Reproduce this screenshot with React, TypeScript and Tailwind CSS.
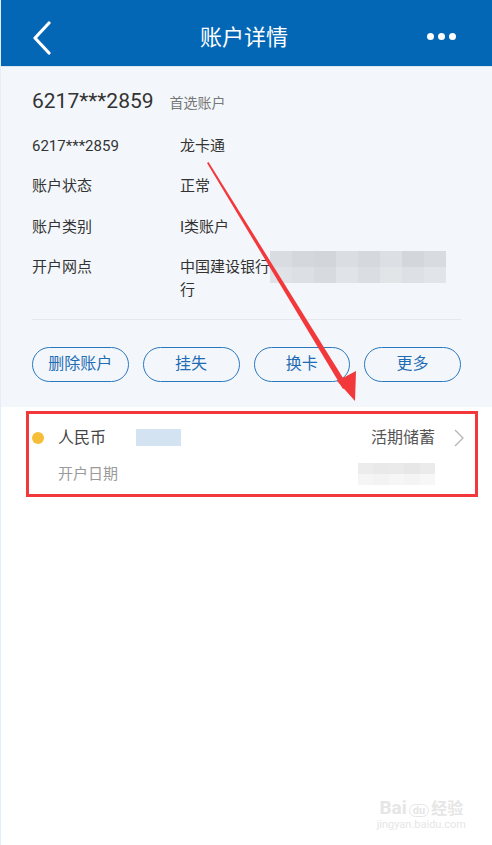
import React from "react";

const rows = [
  { label: "6217***2859", value: "龙卡通" },
  { label: "账户状态", value: "正常" },
  { label: "账户类别", value: "I类账户" },
];

const actions = ["删除账户", "挂失", "换卡", "更多"];

const App = () => {
  return (
    <div
      className="relative w-[492px] h-[845px] overflow-hidden bg-white border-l border-[#e4edf8]"
      style={{ fontFamily: '"Roboto", "Noto Sans CJK SC", sans-serif' }}
    >
      {/* header */}
      <div className="h-[67px] bg-[#0467b6] flex items-center justify-between pl-[30px] pr-[36px] pt-[8px] border-b border-[#dbe6f2]">
        <svg width="22" height="34" viewBox="0 0 22 34" className="mt-[2px]">
          <path d="M18 2 L4 17 L18 32" fill="none" stroke="white" strokeWidth="3.2" strokeLinecap="round" strokeLinejoin="round" />
        </svg>
        <h1 className="text-[22px] text-white ml-[8px]">账户详情</h1>
        <div className="flex gap-[4px] -mt-[2px]">
          <span className="w-[7px] h-[7px] rounded-full bg-white" />
          <span className="w-[7px] h-[7px] rounded-full bg-white" />
          <span className="w-[7px] h-[7px] rounded-full bg-white" />
        </div>
      </div>

      {/* account info */}
      <div className="bg-[#f3f7fb] px-[31px] pt-[19px] pb-[25px]">
        <div className="flex items-baseline gap-[16px]">
          <span className="text-[21px] text-[#333]">6217***2859</span>
          <span className="text-[14px] text-[#777]">首选账户</span>
        </div>
        <div className="mt-[8px] flex flex-col text-[15px] text-[#333]">
          {rows.map((r) => (
            <div key={r.label} className="flex h-[40.5px] items-center">
              <span className="w-[148px]">{r.label}</span>
              <span>{r.value}</span>
            </div>
          ))}
          <div className="flex h-[40.5px] items-center">
            <span className="w-[148px]">开户网点</span>
            <div className="flex items-center h-[23px]">
              <span>中国建设银行</span>
              <span className="w-[176px] h-[32px] shrink-0 grid grid-cols-8 grid-rows-2">
                <span className="bg-[#d9dde2]" />
                <span className="bg-[#d4d8dd]" />
                <span className="bg-[#d2d6db]" />
                <span className="bg-[#dadee3]" />
                <span className="bg-[#d5d9de]" />
                <span className="bg-[#dcdfe4]" />
                <span className="bg-[#d3d7dc]" />
                <span className="bg-[#d8dce1]" />
                <span className="bg-[#dfe2e6]" />
                <span className="bg-[#dcdfe3]" />
                <span className="bg-[#d7dbe0]" />
                <span className="bg-[#e0e3e7]" />
                <span className="bg-[#dadde2]" />
                <span className="bg-[#e2e5e8]" />
                <span className="bg-[#dde0e4]" />
                <span className="bg-[#e1e4e8]" />
              </span>
            </div>
          </div>
          <div className="pl-[148px] -mt-[9px] leading-[23px]">行</div>
        </div>
        <div className="mt-[17px] border-t border-[#e3e8ee]" />
        <div className="mt-[27px] grid grid-cols-4 gap-[14px]">
          {actions.map((a) => (
            <button
              key={a}
              className="h-[35px] rounded-full border-[1.5px] border-[#2a78bf] text-[16px] text-[#1f6cb4] flex items-center justify-center"
            >
              {a}
            </button>
          ))}
        </div>
      </div>

      {/* currency item */}
      <div className="ml-[25px] mr-[14px] mt-[4px] h-[86px] border-[3px] border-[#f2383a] flex flex-col pl-[3px] pr-[10px] pt-[14px]">
        <div className="flex items-center h-[20px]">
          <span className="w-[12px] h-[12px] rounded-full bg-[#f8bd37]" />
          <span className="ml-[14px] text-[16px] text-[#444]">人民币</span>
          <span className="ml-[30px] w-[45px] h-[17px] bg-[#d3e3f1]" />
          <span className="ml-auto text-[16px] text-[#555]">活期储蓄</span>
          <svg width="12" height="18" viewBox="0 0 12 18" className="ml-[18px]">
            <path d="M2 1 L10 9 L2 17" fill="none" stroke="#b5b5b5" strokeWidth="1.3" />
          </svg>
        </div>
        <div className="flex items-center mt-[15px]">
          <span className="ml-[26px] text-[15px] text-[#9a9a9a]">开户日期</span>
          <span className="ml-auto mr-[30px] w-[77px] h-[22px] grid grid-cols-5 grid-rows-2">
            <span className="bg-[#ececec]" />
            <span className="bg-[#e9e9e9]" />
            <span className="bg-[#eaeaea]" />
            <span className="bg-[#e7e7e7]" />
            <span className="bg-[#ebebeb]" />
            <span className="bg-[#f5f5f5]" />
            <span className="bg-[#f3f3f3]" />
            <span className="bg-[#f6f6f6]" />
            <span className="bg-[#f4f4f4]" />
            <span className="bg-[#f7f7f7]" />
          </span>
        </div>
      </div>

      {/* annotation arrow */}
      <svg className="absolute left-0 top-0 pointer-events-none" width="492" height="845" viewBox="0 0 492 845">
        <polygon points="206,163 207.5,162 347,386 342,389" fill="#f2383a" />
        <polygon points="336,381 355,371 354,401" fill="#f2383a" />
      </svg>

      {/* watermark */}
      <div className="absolute right-[26px] bottom-[12px] flex flex-col items-center text-[#e6e6e6] pointer-events-none">
        <div className="flex items-end gap-[2px] text-[19px] font-bold leading-none">
          <span>Bai</span>
          <span className="rounded-full border border-[#e6e6e6] px-[3px] text-[11px]">du</span>
          <span className="text-[16px]">经验</span>
        </div>
        <span className="text-[11px] leading-[16px]">jingyan.baidu.com</span>
      </div>
    </div>
  );
};

export default App;
